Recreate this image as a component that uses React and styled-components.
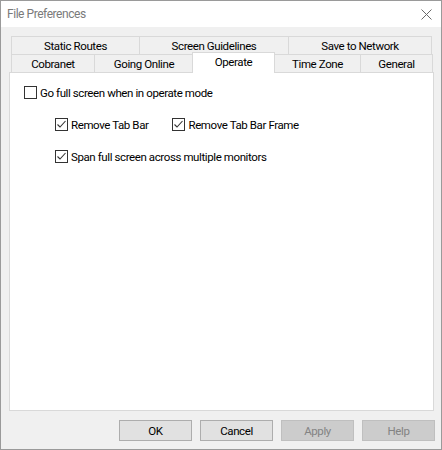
import React from "react";
import styled, { createGlobalStyle } from "styled-components";

const Global = createGlobalStyle`
  html, body { margin: 0; padding: 0; background: #f0f0f0; }
  body { font-family: Roboto, "Liberation Sans", Arial, sans-serif; font-size: 11.5px; letter-spacing: -0.4px; color: #000; }
  * { box-sizing: border-box; }
`;

const Window = styled.div`
  width: 442px;
  height: 450px;
  border: 1px solid #9a9a9a;
  background: #f0f0f0;
  display: flex;
  flex-direction: column;
`;

const TitleBar = styled.div`
  height: 26px;
  background: #fff;
  display: flex;
  align-items: center;
  justify-content: space-between;
  padding: 0 9px 0 6px;
`;

const Title = styled.span`
  color: #7a7a7a;
  font-size: 12px;
  letter-spacing: -0.45px;
  margin-top: -1px;
`;

const Body = styled.div`
  flex: 1;
  display: flex;
  flex-direction: column;
  padding: 9px 7px 0 8px;
`;

const TabStrip = styled.div`
  display: flex;
  flex-direction: column;
  padding-left: 2px;
`;

const TabRow = styled.div`
  display: flex;
  height: 18px;
  align-items: flex-end;
`;

const Tab = styled.div`
  width: ${(p) => p.$w}px;
  height: 18px;
  border: 1px solid #d9d9d9;
  border-bottom: none;
  margin-right: -1px;
  background: #f0f0f0;
  display: flex;
  align-items: center;
  justify-content: center;
  white-space: nowrap;
`;

const ActiveTab = styled(Tab)`
  position: relative;
  z-index: 1;
  background: #fff;
  height: 21px;
  margin: 0 -1px -1px -1px;
  width: ${(p) => p.$w + 2}px;
  padding-bottom: 2px;
`;

const Panel = styled.div`
  height: 339px;
  background: #fff;
  border: 1px solid #d9d9d9;
  display: flex;
  flex-direction: column;
  gap: 19px;
  padding: 13px 0 0 14px;
`;

const Row = styled.div`
  display: flex;
  gap: 24px;
  height: 13px;
  padding-left: ${(p) => p.$indent || 0}px;
`;

const Check = styled.label`
  display: flex;
  align-items: center;
  gap: 3px;
  height: 13px;
  white-space: nowrap;
`;

const Box = styled.span`
  width: 13px;
  height: 13px;
  border: 1px solid #333;
  background: #fff;
  display: flex;
  align-items: center;
  justify-content: center;
  flex: none;
`;

const Buttons = styled.div`
  display: flex;
  justify-content: flex-end;
  gap: 8px;
  margin-top: 9px;
  margin-right: -1px;
`;

const Button = styled.div`
  width: 73px;
  height: 21px;
  display: flex;
  align-items: center;
  justify-content: center;
  background: ${(p) => (p.$disabled ? "#cccccc" : "#e1e1e1")};
  border: 1px solid ${(p) => (p.$disabled ? "#bfbfbf" : "#adadad")};
  color: ${(p) => (p.$disabled ? "#838383" : "#000")};
`;

const CheckBox = ({ checked, children }) => (
  <Check>
    <Box>
      {checked && (
        <svg width="11" height="11" viewBox="0 0 11 11">
          <path d="M1.5 5.5 L4 8 L9.5 2" fill="none" stroke="#333" strokeWidth="1.1" />
        </svg>
      )}
    </Box>
    <span>{children}</span>
  </Check>
);

export default function App() {
  return (
    <>
      <Global />
      <Window>
        <TitleBar>
          <Title>File Preferences</Title>
          <svg width="11" height="11" viewBox="0 0 11 11">
            <path d="M0.5 0.5 L10.5 10.5 M10.5 0.5 L0.5 10.5" stroke="#6a6a6a" strokeWidth="1" />
          </svg>
        </TitleBar>
        <Body>
          <TabStrip>
            <TabRow>
              <Tab $w={129}>Static Routes</Tab>
              <Tab $w={150}>Screen Guidelines</Tab>
              <Tab $w={144}>Save to Network</Tab>
            </TabRow>
            <TabRow>
              <Tab $w={84}>Cobranet</Tab>
              <Tab $w={100}>Going Online</Tab>
              <ActiveTab $w={81}>Operate</ActiveTab>
              <Tab $w={87}>Time Zone</Tab>
              <Tab $w={73}>General</Tab>
            </TabRow>
          </TabStrip>
          <Panel>
            <Row>
              <CheckBox>Go full screen when in operate mode</CheckBox>
            </Row>
            <Row $indent={31}>
              <CheckBox checked>Remove Tab Bar</CheckBox>
              <CheckBox checked>Remove Tab Bar Frame</CheckBox>
            </Row>
            <Row $indent={31}>
              <CheckBox checked>Span full screen across multiple monitors</CheckBox>
            </Row>
          </Panel>
          <Buttons>
            <Button>OK</Button>
            <Button>Cancel</Button>
            <Button $disabled>Apply</Button>
            <Button $disabled>Help</Button>
          </Buttons>
        </Body>
      </Window>
    </>
  );
}
